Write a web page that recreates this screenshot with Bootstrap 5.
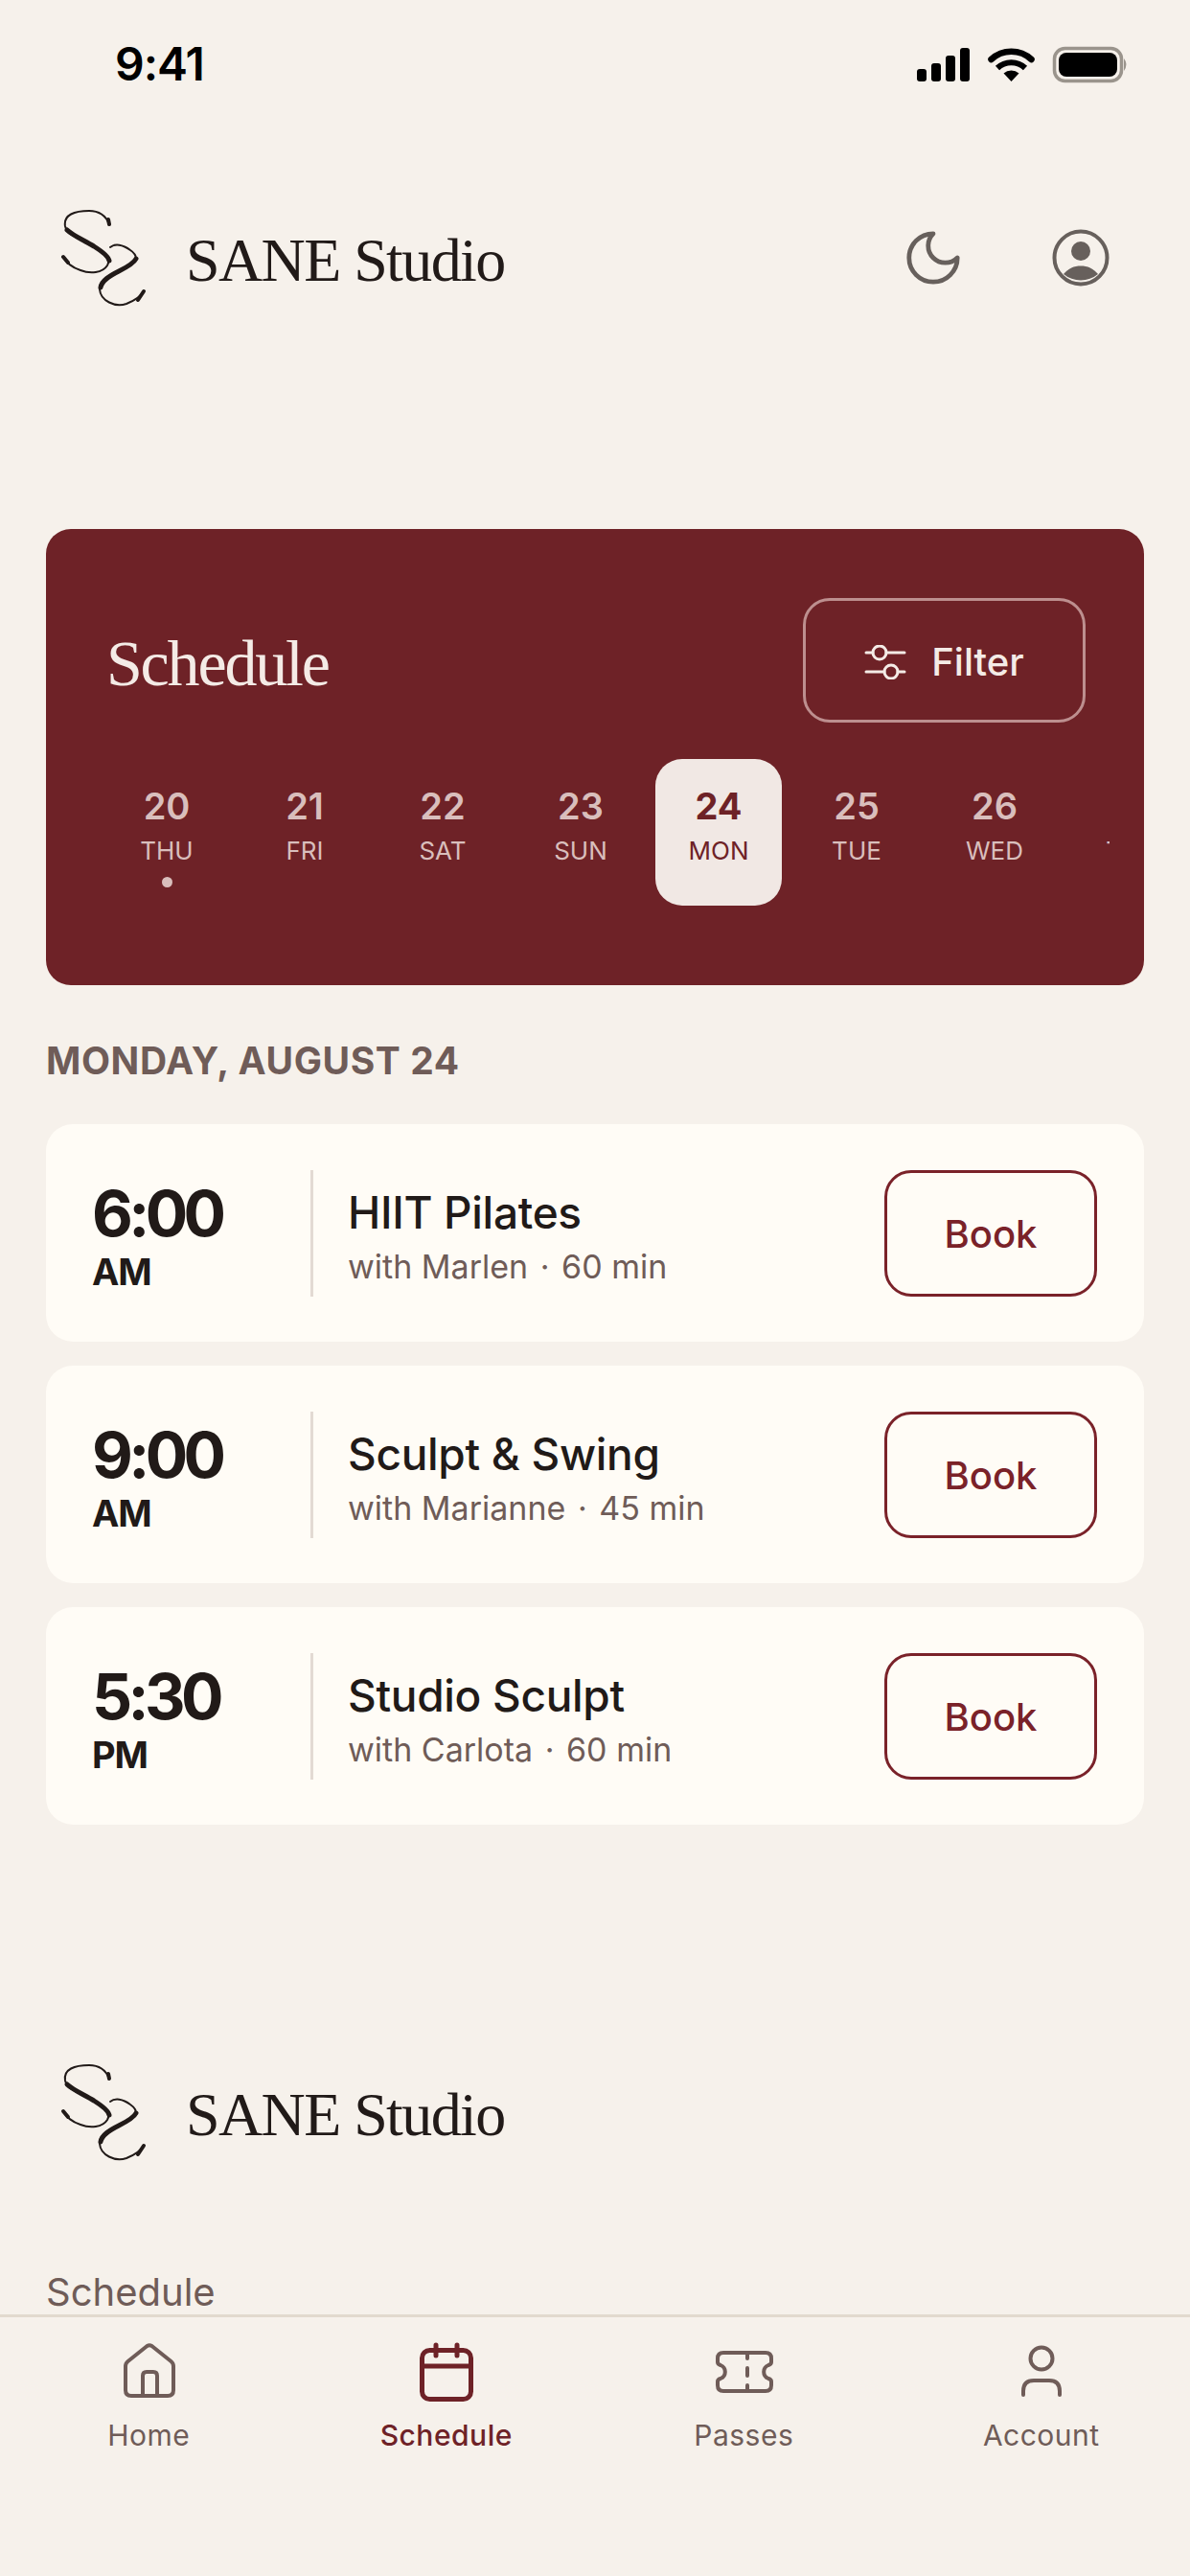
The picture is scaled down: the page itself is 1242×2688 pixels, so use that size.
<!DOCTYPE html>
<html lang="en">
  <head>
    <meta charset="UTF-8" />
    <meta name="viewport" content="width=device-width, initial-scale=1.0" />
    <title>SANE Studio</title>
    <link
      rel="stylesheet"
      href="https://cdn.jsdelivr.net/npm/bootstrap@5.3.2/dist/css/bootstrap.min.css"
    />
    <style>
      body {
        background: #f6f1eb;
        font-family: Inter, "Liberation Sans", sans-serif;
        color: #211a18;
      }
      .status-strip {
        height: 100px;
        padding-left: 120px;
        padding-right: 64px;
      }
      .status-time {
        font-size: 48px;
        font-weight: 600;
        letter-spacing: -1px;
        line-height: 134px;
        color: #000;
        height: 100px;
      }
      .brand-strip {
        height: 102px;
        padding-left: 60px;
        padding-right: 84px;
      }
      .top-strip {
        margin-top: 118px;
      }
      .brand-name {
        font-family: "Liberation Serif", serif;
        font-size: 64px;
        letter-spacing: -1.6px;
        line-height: 80px;
        margin-left: 38px;
        margin-top: 6px;
        color: #211a18;
      }
      .moon-btn {
        margin-right: 96px;
      }
      .sched-panel {
        margin: 232px 48px 0;
        height: 476px;
        padding: 72px 61px 0 60px;
        background: #6e2227;
        border-radius: 26px;
      }
      .panel-title {
        font-family: "Liberation Serif", serif;
        font-size: 68px;
        letter-spacing: -2.2px;
        line-height: 86px;
        color: #f4ebe6;
        margin: 6px 0 0 3px;
      }
      .btn-filter {
        width: 295px;
        height: 130px;
        padding-top: 9px;
        border: 3px solid #bd8f8f;
        border-radius: 28px;
        color: #f4ebe6;
        font-size: 40px;
        font-weight: 500;
        gap: 26px;
      }
      .day-strip {
        margin-top: 38px;
        margin-right: -25px;
        height: 153px;
        overflow: hidden;
        gap: 12px;
      }
      .day-cell {
        flex: 0 0 132px;
        height: 153px;
        border-radius: 28px;
        color: #d9bebc;
        text-align: center;
        padding-top: 24px;
      }
      .day-cell.is-today {
        background: #f1e8e4;
        color: #6e2227;
      }
      .day-num {
        font-size: 38px;
        font-weight: 600;
        line-height: 50px;
      }
      .is-today .day-num {
        font-weight: 700;
      }
      .day-name {
        font-size: 26px;
        line-height: 34px;
        margin-top: 5px;
      }
      .day-dot {
        width: 11px;
        height: 11px;
        border-radius: 50%;
        background: #d9bebc;
        margin: 10px auto 0;
      }
      .date-title {
        margin: 54px 48px 41px;
        font-size: 39px;
        letter-spacing: 0.6px;
        line-height: 50px;
        font-weight: 700;
        color: #6f5c58;
      }
      .class-list {
        margin: 0 48px;
        gap: 25px;
      }
      .class-item {
        height: 227px;
        padding: 0 49px 0 48px;
        background: #fffcf6;
        border: 0;
        border-radius: 28px;
      }
      .time-col {
        width: 228px;
        padding-top: 5px;
        color: #211a18;
      }
      .time-big {
        font-size: 66px;
        font-weight: 700;
        letter-spacing: -4.6px;
        line-height: 72px;
      }
      .time-ampm {
        font-size: 38px;
        font-weight: 700;
        letter-spacing: -1px;
        line-height: 42px;
        margin-top: 4px;
      }
      .time-rule {
        width: 3px;
        height: 132px;
        background: #e3dad3;
        margin-right: 36px;
      }
      .class-info {
        padding-top: 6px;
      }
      .class-title {
        font-size: 46px;
        font-weight: 500;
        line-height: 58px;
        letter-spacing: -0.3px;
      }
      .class-sub {
        font-size: 34px;
        line-height: 44px;
        color: #6f5c58;
        margin-top: 6px;
      }
      .dot-sep {
        margin: 0 3px;
      }
      .btn-book {
        width: 222px;
        height: 132px;
        padding-top: 9px;
        border: 3px solid #7a2229;
        border-radius: 28px;
        color: #7a2229;
        font-size: 40px;
        font-weight: 500;
      }
      .foot-strip {
        margin-top: 249px;
      }
      .foot-link {
        margin: 112px 48px 0;
        font-size: 40px;
        line-height: 50px;
        color: #6f5c58;
      }
      .tab-bar {
        height: 273px;
        padding-top: 26px;
        background: #f6f1eb;
        border-top: 3px solid #e2dace;
      }
      .tab-item {
        flex: 1 1 0;
        color: #6f5c58;
        font-size: 30px;
        line-height: 40px;
        letter-spacing: 0.5px;
        gap: 13px;
      }
      .tab-item.is-active {
        color: #6e2227;
        font-weight: 500;
      }
    </style>
    <script src="https://cdn.jsdelivr.net/npm/bootstrap@5.3.2/dist/js/bootstrap.bundle.min.js"></script>
  </head>
  <body>
    <svg width="0" height="0" class="position-absolute">
      <symbol id="logo" viewBox="0 0 96 114">
        <g fill="none" stroke="#211a18" stroke-linecap="round">
          <path stroke-width="2" d="M54 22C50 12 42 8 33 8C18 8 6 12 8 24C10 34 26 38 38 45C50 52 56 58 52 65C47 73 34 74 24 70C15 67 9 62 6 56" />
          <path stroke-width="5" d="M10 28C15 33 26 38 38 45C46 50 53 55 54 60" />
          <path stroke-width="4" d="M53 17L54 22M6 56L11 62" />
          <path stroke-width="2" d="M55 46C60 42 68 43 76 49C86 56 82 62 72 67C58 73 43 79 44 90C45 102 60 109 72 105C82 101 87 97 90 92" />
          <path stroke-width="5" d="M82 58C80 62 72 67 64 71C54 76 46 81 45 88" />
          <path stroke-width="4" d="M84 101L90 92" />
        </g>
      </symbol>
    </svg>

    <div class="status-strip d-flex justify-content-between">
      <div class="status-time">9:41</div>
      <svg width="221" height="100" viewBox="957 0 221 100">
        <rect x="957" y="72" width="10" height="13" rx="3" />
        <rect x="972" y="66" width="10" height="19" rx="3" />
        <rect x="987" y="58" width="10" height="27" rx="3" />
        <rect x="1002" y="50" width="10" height="35" rx="3" />
        <path d="M1055.500 85 l-8-8.500 a12 12 0 0 1 16 0z" />
        <path d="M1041 71a21 21 0 0 1 29 0" fill="none" stroke="#000" stroke-width="6" />
        <path d="M1034.500 62a31 31 0 0 1 42 0" fill="none" stroke="#000" stroke-width="6.500" stroke-linecap="round" />
        <rect x="1100.500" y="50.500" width="70" height="34" rx="11" fill="none" stroke="#9a948c" stroke-width="3.500" />
        <rect x="1105" y="55" width="61" height="25" rx="8" />
        <path d="M1173 61q5 6 0 13z" fill="#9a948c" />
      </svg>
    </div>

    <header class="brand-strip top-strip d-flex align-items-center">
      <svg width="96" height="114" class="flex-shrink-0"><use href="#logo" /></svg>
      <div class="brand-name flex-grow-1">SANE Studio</div>
      <svg width="56" height="56" viewBox="2 2 20 20" fill="none" stroke="#67605c" stroke-width="1.700" stroke-linejoin="round" class="moon-btn">
        <path d="M12 3a6 6 0 0 0 9 9 9 9 0 1 1-9-9Z" />
      </svg>
      <svg width="60" height="60" viewBox="0 0 60 60">
        <circle cx="30" cy="30" r="27.500" fill="none" stroke="#67605c" stroke-width="4" />
        <circle cx="30" cy="23" r="10" fill="#67605c" />
        <path d="M12 47C17 41 23 38.500 30 38.500C37 38.500 43 41 48 47A28 28 0 0 1 12 47Z" fill="#67605c" />
      </svg>
    </header>

    <section class="sched-panel">
      <div class="d-flex justify-content-between align-items-center">
        <h1 class="panel-title">Schedule</h1>
        <button class="btn btn-filter d-flex align-items-center justify-content-center">
          <svg width="44" height="36" viewBox="0 0 44 36" fill="none" stroke="#f4ebe6" stroke-width="3" stroke-linecap="round">
            <path d="M2 8H9M23 8H42M2 28H21M35 28H42" />
            <circle cx="16" cy="8" r="7" />
            <circle cx="28" cy="28" r="7" />
          </svg>
          Filter
        </button>
      </div>
      <div class="day-strip d-flex" id="days"></div>
    </section>

    <div class="date-title">MONDAY, AUGUST 24</div>

    <div class="class-list d-flex flex-column" id="classes"></div>

    <footer>
      <div class="brand-strip foot-strip d-flex align-items-center">
        <svg width="96" height="114" class="flex-shrink-0"><use href="#logo" /></svg>
        <div class="brand-name">SANE Studio</div>
      </div>
      <div class="foot-link">Schedule</div>
    </footer>

    <nav class="tab-bar fixed-bottom d-flex align-items-start">
      <a class="tab-item d-flex flex-column align-items-center text-decoration-none">
        <svg width="64" height="64" viewBox="-6 -1 64 64" fill="none" stroke="#6f5c58" stroke-width="4" stroke-linejoin="round">
          <path d="M24.500 3Q27 1.500 29.500 3L49.500 19Q52 21 52 24V49Q52 55 46 55H8Q2 55 2 49V24Q2 21 4.500 19ZM20 55V34Q20 30 24 30H31Q35 30 35 34V55" />
        </svg>
        Home
      </a>
      <a class="tab-item is-active d-flex flex-column align-items-center text-decoration-none">
        <svg width="64" height="64" viewBox="-4 0 64 64" fill="none" stroke="#6e2227" stroke-width="5" stroke-linecap="round">
          <rect x="2.500" y="8.500" width="51" height="51" rx="8" />
          <path d="M2.500 25H53.500M17 3V14M39 3V14" />
        </svg>
        Schedule
      </a>
      <a class="tab-item d-flex flex-column align-items-center text-decoration-none">
        <svg width="64" height="64" viewBox="-3 -9 64 64" fill="none" stroke="#6f5c58" stroke-width="4" stroke-linecap="round">
          <path d="M8 2H52Q58 2 58 8V12Q58 14 55 15A7.500 7.500 0 0 0 55 29Q58 30 58 32V36Q58 42 52 42H8Q2 42 2 36V32Q2 30 5 29A7.500 7.500 0 0 0 5 15Q2 14 2 12V8Q2 2 8 2Z" />
          <path d="M33 3V8M33 18V26M33 36V41" />
        </svg>
        Passes
      </a>
      <a class="tab-item d-flex flex-column align-items-center text-decoration-none">
        <svg width="64" height="64" viewBox="-10 -4 64 64" fill="none" stroke="#6f5c58" stroke-width="4" stroke-linecap="round">
          <circle cx="22" cy="13" r="11.500" />
          <path d="M3 51V47Q3 36 14 36H30Q41 36 41 47V51" />
        </svg>
        Account
      </a>
    </nav>

    <script>
      let days = [
        ["20", "THU", true],
        ["21", "FRI"],
        ["22", "SAT"],
        ["23", "SUN"],
        ["24", "MON"],
        ["25", "TUE"],
        ["26", "WED"],
        ["27", "THU"],
      ];
      let dayHtml = "";
      for (let i = 0; i < days.length; i++) {
        dayHtml += `
          <div class="day-cell ${days[i][0] == "24" ? "is-today" : ""}">
            <div class="day-num">${days[i][0]}</div>
            <div class="day-name">${days[i][1]}</div>
            ${days[i][2] ? '<div class="day-dot"></div>' : ""}
          </div>`;
      }
      document.getElementById("days").innerHTML = dayHtml;

      let classes = [
        ["6:00", "AM", "HIIT Pilates", "with Marlen", "60 min"],
        ["9:00", "AM", "Sculpt &amp; Swing", "with Marianne", "45 min"],
        ["5:30", "PM", "Studio Sculpt", "with Carlota", "60 min"],
      ];
      let classHtml = "";
      for (let i = 0; i < classes.length; i++) {
        let c = classes[i];
        classHtml += `
          <div class="class-item card flex-row align-items-center">
            <div class="time-col">
              <div class="time-big">${c[0]}</div>
              <div class="time-ampm">${c[1]}</div>
            </div>
            <div class="time-rule"></div>
            <div class="class-info flex-grow-1">
              <div class="class-title">${c[2]}</div>
              <div class="class-sub">${c[3]} <span class="dot-sep">·</span> ${c[4]}</div>
            </div>
            <button class="btn btn-book">Book</button>
          </div>`;
      }
      document.getElementById("classes").innerHTML = classHtml;
    </script>
  </body>
</html>
